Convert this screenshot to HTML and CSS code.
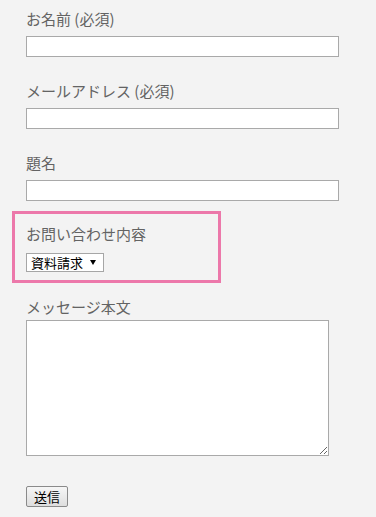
FILE: index.html
```html
<!DOCTYPE html>
<html lang="ja">
<head>
<meta charset="utf-8">
<link rel="stylesheet" href="styles.css">
</head>
<body>
<form class="form">
  <div class="field">
    <label class="label">お名前 (必須)</label>
    <input class="text" type="text">
  </div>
  <div class="field">
    <label class="label">メールアドレス (必須)</label>
    <input class="text" type="text">
  </div>
  <div class="field field-last">
    <label class="label">題名</label>
    <input class="text" type="text">
  </div>
  <div class="highlight">
    <label class="label">お問い合わせ内容</label>
    <select class="select">
      <option>資料請求</option>
    </select>
  </div>
  <div class="field field-msg">
    <label class="label label-tight">メッセージ本文</label>
    <textarea class="area"></textarea>
  </div>
  <button class="submit" type="button">送信</button>
</form>
</body>
</html>
```
FILE: styles.css
```css
html, body {
  margin: 0;
  padding: 0;
  background: #f3f3f3;
}
body {
  font-family: "Noto Sans CJK JP", "Noto Sans", sans-serif;
  color: #636363;
}
.form {
  display: flex;
  flex-direction: column;
  align-items: flex-start;
  padding: 8px 0 0 26px;
}
.field {
  display: flex;
  flex-direction: column;
  align-items: flex-start;
  margin-bottom: 23px;
}
.field-last {
  margin-bottom: 10px;
}
.label {
  display: block;
  font-size: 15px;
  line-height: 22px;
  margin-bottom: 6px;
}
.label-tight {
  margin-bottom: 2px;
}
.text {
  box-sizing: border-box;
  width: 313px;
  height: 21px;
  border: 1px solid #a9a9a9;
  background: #fff;
  margin: 0;
  padding: 0 3px;
}
.highlight {
  margin-left: -14px;
  box-sizing: border-box;
  width: 209px;
  border: 3px solid #ec78aa;
  padding: 9px 0 8px 11px;
  display: flex;
  flex-direction: column;
  align-items: flex-start;
  margin-bottom: 13px;
}
.highlight .label {
  margin-bottom: 8px;
}
.select {
  appearance: none;
  -webkit-appearance: none;
  box-sizing: border-box;
  width: 78px;
  height: 19px;
  margin: 0;
  border: 1px solid #a6a6a6;
  border-radius: 0;
  background: #fff url("data:image/svg+xml,%3Csvg xmlns='http://www.w3.org/2000/svg' width='6' height='5'%3E%3Cpath d='M0 0H6L3 5Z' fill='%23000'/%3E%3C/svg%3E") no-repeat right 7px center;
  color: #000;
  font-family: "Noto Sans CJK JP", sans-serif;
  font-size: 13px;
  line-height: 17px;
  padding: 0 0 0 4px;
}
.field-msg {
  margin-bottom: 30px;
}
.area {
  box-sizing: border-box;
  width: 303px;
  height: 136px;
  border: 1px solid #a9a9a9;
  background: #fff;
  margin: 0;
  padding: 2px;
  resize: both;
}
.submit {
  box-sizing: border-box;
  width: 42px;
  height: 21px;
  margin: 0;
  padding: 0;
  border: 1px solid #8a8a8a;
  border-radius: 2px;
  background: linear-gradient(#f6f6f6, #dedede);
  color: #000;
  font-family: "Noto Sans CJK JP", sans-serif;
  font-size: 13px;
  line-height: 19px;
}
```
